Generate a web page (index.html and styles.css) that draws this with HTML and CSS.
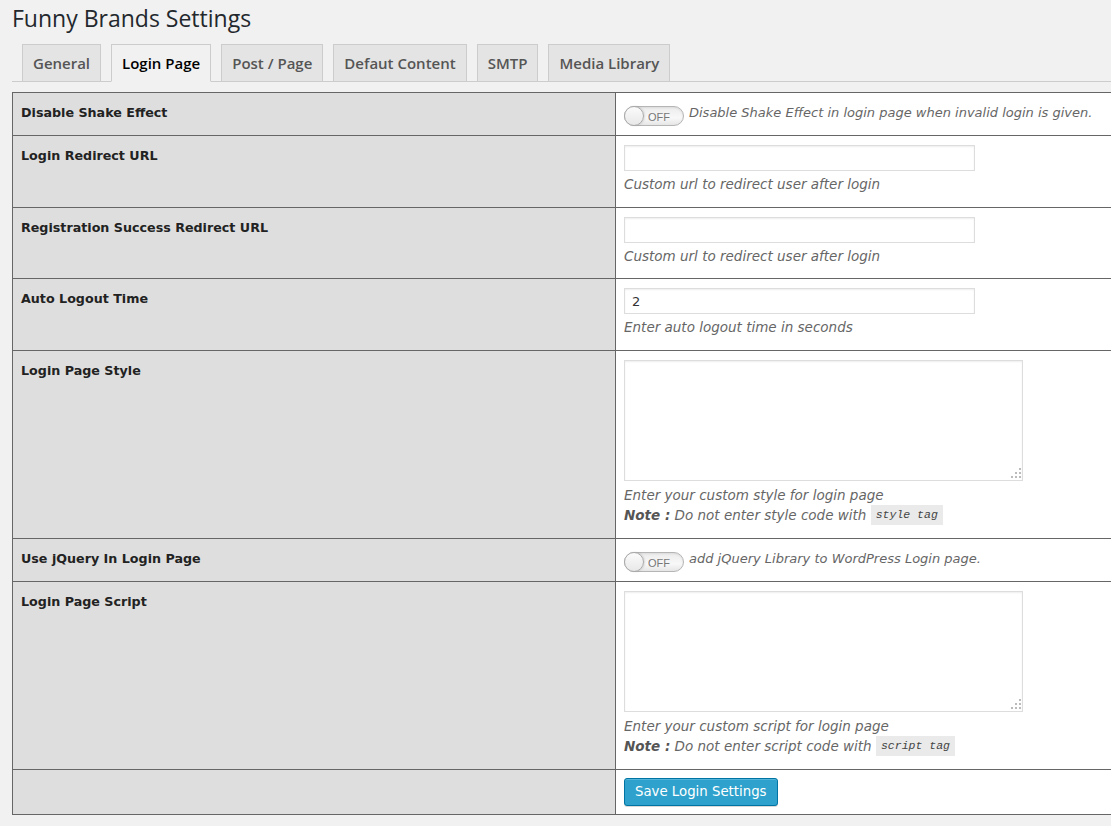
FILE: index.html
```html
<!DOCTYPE html>
<html>
<head>
<meta charset="utf-8">
<title>Funny Brands Settings</title>
<link rel="stylesheet" href="styles.css">
</head>
<body>
<div class="wrap">
  <h2 class="title">Funny Brands Settings</h2>
  <nav class="tabs">
    <a class="tab">General</a>
    <a class="tab active">Login Page</a>
    <a class="tab">Post / Page</a>
    <a class="tab">Defaut Content</a>
    <a class="tab">SMTP</a>
    <a class="tab">Media Library</a>
  </nav>
  <table class="form-table">
    <tr class="row-short">
      <th>Disable Shake Effect</th>
      <td><div class="switch-line"><span class="toggle"><span class="knob"></span><span class="off">OFF</span></span><span class="desc-inline">Disable Shake Effect in login page when invalid login is given.</span></div></td>
    </tr>
    <tr>
      <th>Login Redirect URL</th>
      <td><input class="text" type="text" value=""><p class="desc">Custom url to redirect user after login</p></td>
    </tr>
    <tr>
      <th>Registration Success Redirect URL</th>
      <td><input class="text" type="text" value=""><p class="desc">Custom url to redirect user after login</p></td>
    </tr>
    <tr>
      <th>Auto Logout Time</th>
      <td><input class="text" type="text" value="2"><p class="desc">Enter auto logout time in seconds</p></td>
    </tr>
    <tr>
      <th>Login Page Style</th>
      <td class="area-cell">
        <div class="area-wrap"><textarea class="area"></textarea><span class="grip"></span></div>
        <p class="desc">Enter your custom style for login page</p>
        <p class="desc"><b>Note :</b> Do not enter style code with <code>style tag</code></p>
      </td>
    </tr>
    <tr class="row-short">
      <th>Use jQuery In Login Page</th>
      <td><div class="switch-line"><span class="toggle"><span class="knob"></span><span class="off">OFF</span></span><span class="desc-inline">add jQuery Library to WordPress Login page.</span></div></td>
    </tr>
    <tr>
      <th>Login Page Script</th>
      <td class="area-cell">
        <div class="area-wrap"><textarea class="area"></textarea><span class="grip"></span></div>
        <p class="desc">Enter your custom script for login page</p>
        <p class="desc"><b>Note :</b> Do not enter script code with <code>script tag</code></p>
      </td>
    </tr>
    <tr class="row-btn">
      <th></th>
      <td><button class="button" type="button">Save Login Settings</button></td>
    </tr>
  </table>
</div>
</body>
</html>
```

FILE: styles.css
```css
html, body {
  margin: 0;
  padding: 0;
  background: #f1f1f1;
  overflow: hidden;
}
body {
  font-family: "DejaVu Sans", Verdana, sans-serif;
  font-size: 13px;
  color: #444;
}
.wrap {
  padding-left: 12px;
}
.title {
  margin: 0;
  padding-top: 4px;
  font-family: "Open Sans", sans-serif;
  font-size: 23px;
  line-height: 29px;
  font-weight: 400;
  color: #23282d;
}
.tabs {
  display: flex;
  margin-top: 11px;
  padding-left: 10px;
  border-bottom: 1px solid #ccc;
}
.tab {
  display: block;
  margin-right: 10px;
  margin-bottom: -1px;
  padding: 6px 10px;
  line-height: 24px;
  font-family: "Open Sans", sans-serif;
  font-size: 15px;
  font-weight: 600;
  color: #555;
  background: #e4e4e4;
  border: 1px solid #ccc;
}
.tab.active {
  background: #f1f1f1;
  color: #000;
  border-bottom-color: #f1f1f1;
}
.form-table {
  margin-top: 10px;
  width: 1110px;
  border-collapse: separate;
  border-spacing: 0;
  border-top: 1px solid #666;
  border-left: 1px solid #666;
}
.form-table th {
  width: 586px;
  padding: 11px 8px 9px;
  vertical-align: top;
  text-align: left;
  background: #dedede;
  border-right: 1px solid #666;
  border-bottom: 1px solid #666;
  font-weight: bold;
  font-size: 12.7px;
  line-height: 18px;
  color: #222;
}
.form-table td {
  padding: 9px 8px 12.67px;
  vertical-align: top;
  background: #fff;
  border-bottom: 1px solid #666;
}
.form-table .area-cell {
  padding-bottom: 13px;
}
.form-table .row-short td {
  padding: 13px 8px 9px;
}
.form-table .row-btn td {
  padding: 8px;
}
.switch-line {
  display: flex;
  align-items: flex-start;
  gap: 5px;
  height: 20px;
}
.toggle {
  position: relative;
  flex: none;
  width: 58px;
  height: 18px;
  border: 1px solid #b5b5b5;
  border-radius: 11px;
  background: linear-gradient(#ececec, #f8f8f8 60%, #e6e6e6);
  box-shadow: inset 0 1px 2px rgba(0,0,0,0.08);
}
.knob {
  position: absolute;
  left: -1px;
  top: -1px;
  width: 18px;
  height: 18px;
  border: 1px solid #aaa;
  border-radius: 50%;
  background: linear-gradient(#fbfbfb, #e8e8e8);
  box-shadow: 1px 0 2px rgba(0,0,0,0.12);
}
.off {
  position: absolute;
  left: 23px;
  top: 3px;
  font-family: "Liberation Sans", Arial, sans-serif;
  font-size: 11px;
  line-height: 14px;
  color: #777;
}
.desc-inline {
  margin-top: -3px;
  font-style: italic;
  font-size: 13px;
  color: #666;
  line-height: 20px;
  white-space: nowrap;
}
.text {
  display: block;
  box-sizing: border-box;
  width: 351px;
  height: 26px;
  margin: 0;
  padding: 0 7px;
  border: 1px solid #ddd;
  box-shadow: inset 0 1px 2px rgba(0,0,0,0.07);
  font-family: "DejaVu Sans", sans-serif;
  font-size: 13px;
  color: #333;
  background: #fff;
}
.desc {
  margin: 3px 0 0;
  font-style: italic;
  font-size: 13.5px;
  color: #666;
  line-height: 20px;
}
.area-cell .desc {
  margin-top: 4px;
}
.area-cell .desc + .desc {
  margin-top: 0;
}
.area-wrap {
  position: relative;
  width: 399px;
  height: 121px;
}
.area {
  display: block;
  box-sizing: border-box;
  width: 399px;
  height: 121px;
  margin: 0;
  border: 1px solid #ddd;
  box-shadow: inset 0 1px 2px rgba(0,0,0,0.07);
  resize: none;
  background: #fff;
}
.grip {
  position: absolute;
  right: 2px;
  bottom: 3px;
  width: 10px;
  height: 10px;
  background:
    radial-gradient(circle, #bbb 0 1px, transparent 1.2px) 8px 0 / 2px 2px no-repeat,
    radial-gradient(circle, #bbb 0 1px, transparent 1.2px) 4px 4px / 2px 2px no-repeat,
    radial-gradient(circle, #bbb 0 1px, transparent 1.2px) 8px 4px / 2px 2px no-repeat,
    radial-gradient(circle, #bbb 0 1px, transparent 1.2px) 0 8px / 2px 2px no-repeat,
    radial-gradient(circle, #bbb 0 1px, transparent 1.2px) 4px 8px / 2px 2px no-repeat,
    radial-gradient(circle, #bbb 0 1px, transparent 1.2px) 8px 8px / 2px 2px no-repeat;
}
.desc b {
  color: #555;
}
code {
  display: inline-block;
  margin-left: 0;
  padding: 1px 5px;
  background: #eaeaea;
  font-family: "Liberation Mono", monospace;
  font-size: 11.5px;
  line-height: 18px;
  color: #444;
  font-style: italic;
  vertical-align: top;
}
.button {
  display: block;
  height: 28px;
  margin: 0;
  padding: 0 10px;
  border: 1px solid #0074a2;
  border-radius: 3px;
  background: #2ea2cc;
  box-shadow: inset 0 1px 0 rgba(120,200,230,0.5), 0 1px 0 rgba(0,0,0,0.15);
  color: #fff;
  font-family: "DejaVu Sans", sans-serif;
  font-size: 13.3px;
  line-height: 26px;
}
```
